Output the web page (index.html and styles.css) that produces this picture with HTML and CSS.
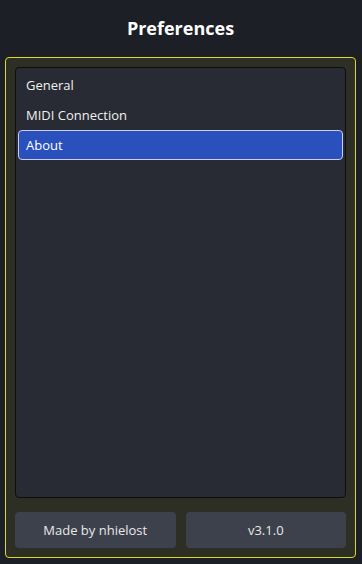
FILE: index.html
```html
<!DOCTYPE html>
<html>
<head>
<meta charset="utf-8">
<link rel="stylesheet" href="styles.css">
</head>
<body>
<div class="app">
  <h1 class="title">Preferences</h1>
  <div class="panel">
    <div class="list">
      <div class="item">General</div>
      <div class="item">MIDI Connection</div>
      <div class="item selected">About</div>
    </div>
    <div class="buttons">
      <div class="btn">Made by nhielost</div>
      <div class="btn">v3.1.0</div>
    </div>
  </div>
</div>
</body>
</html>
```
FILE: styles.css
```css
html, body {
  margin: 0;
  padding: 0;
  background: #1c1f26;
  width: 362px;
  height: 564px;
  overflow: hidden;
}
.app {
  font-family: "Open Sans", sans-serif;
  color: #ffffff;
  padding: 0 6px 0 5px;
}
.title {
  margin: 0;
  height: 57px;
  display: flex;
  align-items: center;
  justify-content: center;
  font-size: 18px;
  font-weight: 700;
  padding-bottom: 2px;
  box-sizing: border-box;
}
.panel {
  height: 501px;
  box-sizing: border-box;
  border: 1px solid #dcd81a;
  border-radius: 4px;
  background: #2d2e24;
  padding: 9px 9px 9px 9px;
  display: flex;
  flex-direction: column;
}
.list {
  flex: 1;
  background: #282b33;
  border: 1px solid #0d0e10;
  border-radius: 4px;
  padding: 2px 2px;
  display: flex;
  flex-direction: column;
}
.item {
  height: 30px;
  line-height: 28px;
  padding-left: 7px;
  font-size: 13px;
  color: #f0f0f0;
  border: 1px solid transparent;
  border-radius: 4px;
  box-sizing: border-box;
}
.selected {
  background: #2a50bd;
  border-color: #c8cfe6;
  color: #ffffff;
}
.buttons {
  display: flex;
  gap: 10px;
  margin-top: 14px;
}
.btn {
  flex: 1;
  height: 36px;
  background: #3d414c;
  border-radius: 4px;
  display: flex;
  align-items: center;
  justify-content: center;
  font-size: 13px;
  color: #e8e8e8;
}
```
